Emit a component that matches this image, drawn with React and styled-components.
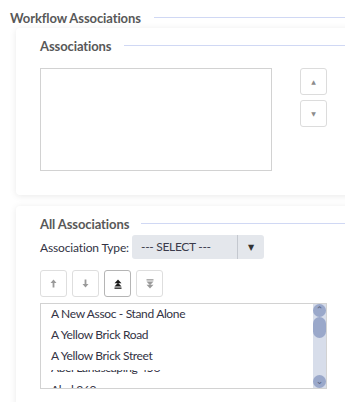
import React from 'react'
import styled, { createGlobalStyle } from 'styled-components'

const GlobalStyle = createGlobalStyle`
  body {
    margin: 0;
    background: #ffffff;
    font-family: Lato, "Open Sans", sans-serif;
    overflow: hidden;
  }
`

const items = [
  'A New Assoc - Stand Alone',
  'A Yellow Brick Road',
  'A Yellow Brick Street',
]

function ArrowUp({ color = '#9a9a9a' }) {
  return (
    <svg width="7" height="9" viewBox="0 0 7 9">
      <path d="M3.5 0.5 L6.5 4 H4.4 V8.5 H2.6 V4 H0.5 Z" fill={color} />
    </svg>
  )
}

function ArrowDown({ color = '#9a9a9a' }) {
  return (
    <svg width="7" height="9" viewBox="0 0 7 9">
      <path d="M3.5 8.5 L6.5 5 H4.4 V0.5 H2.6 V5 H0.5 Z" fill={color} />
    </svg>
  )
}

function ToTop({ color = '#1a1a1a' }) {
  return (
    <svg width="8" height="10" viewBox="0 0 8 10">
      <path d="M4 0.5 L7.5 4.2 H0.5 Z" fill={color} />
      <path d="M4 3.8 L7.5 7.5 H0.5 Z" fill={color} />
      <rect x="0.5" y="8.5" width="7" height="1.3" fill={color} />
    </svg>
  )
}

function ToBottom({ color = '#9a9a9a' }) {
  return (
    <svg width="8" height="10" viewBox="0 0 8 10">
      <rect x="0.5" y="0.2" width="7" height="1.3" fill={color} />
      <path d="M4 6.2 L7.5 2.5 H0.5 Z" fill={color} />
      <path d="M4 9.5 L7.5 5.8 H0.5 Z" fill={color} />
    </svg>
  )
}

function App() {
  return (
    <Page>
      <GlobalStyle />
      <Legend $pad="10px">
        <LegendText>Workflow Associations</LegendText>
        <Rule />
      </Legend>

      <Card $height="167px">
        <Legend>
          <LegendText>Associations</LegendText>
          <Rule />
        </Legend>
        <Split>
          <Box />
          <SideButtons>
            <SmallButton>
              <Tri>▲</Tri>
            </SmallButton>
            <SmallButton>
              <Tri>▼</Tri>
            </SmallButton>
          </SideButtons>
        </Split>
      </Card>

      <Card $top="11px" $height="200px">
        <Legend $small>
          <LegendText>All Associations</LegendText>
          <Rule />
        </Legend>
        <TypeRow>
          <Label>Association Type:</Label>
          <Select>
            <SelectText>--- SELECT ---</SelectText>
            <SelectCaret>▼</SelectCaret>
          </Select>
        </TypeRow>
        <ToolRow>
          <ToolButton>
            <ArrowUp />
          </ToolButton>
          <ToolButton>
            <ArrowDown />
          </ToolButton>
          <ToolButton $active>
            <ToTop />
          </ToolButton>
          <ToolButton>
            <ToBottom />
          </ToolButton>
        </ToolRow>
        <List>
          <Items>
            {items.map((t) => (
              <Item key={t}>{t}</Item>
            ))}
            <ClipItem>
              <ClipText>Abel Landscaping 456</ClipText>
            </ClipItem>
            <Item $last>Abel 360</Item>
          </Items>
          <Scrollbar>
            <ScrollCap>⌃</ScrollCap>
            <Thumb />
            <Spacer />
            <ScrollCap>⌄</ScrollCap>
          </Scrollbar>
        </List>
      </Card>
    </Page>
  )
}

export default App

const Page = styled.div`
  width: 345px;
  height: 402px;
  padding-top: 10px;
  box-sizing: border-box;
  overflow: hidden;
`

const Legend = styled.div`
  display: flex;
  align-items: center;
  gap: ${(p) => (p.$small ? '12px' : '13px')};
  padding-left: ${(p) => p.$pad || '0'};
  height: 15px;
`

const LegendText = styled.span`
  font-size: 13px;
  font-weight: 700;
  color: #585858;
  white-space: nowrap;
  letter-spacing: -0.1px;
`

const Rule = styled.div`
  flex: 1;
  height: 1px;
  background: #d0d8f4;
`

const Card = styled.div`
  margin-left: 16px;
  margin-right: -20px;
  margin-top: ${(p) => p.$top || '3px'};
  height: ${(p) => p.$height};
  background: #ffffff;
  border-radius: 4px;
  box-shadow: 0 1px 7px rgba(0, 0, 0, 0.09);
  padding: 10px 0 0 24px;
  box-sizing: border-box;
`

const Split = styled.div`
  display: flex;
  gap: 28px;
  margin-top: 15px;
`

const Box = styled.div`
  width: 232px;
  height: 103px;
  border: 1px solid #d2d2d2;
  box-sizing: border-box;
`

const SideButtons = styled.div`
  display: flex;
  flex-direction: column;
  gap: 5px;
`

const SmallButton = styled.div`
  width: 27px;
  height: 27px;
  border: 1px solid #dcdcdc;
  border-radius: 3px;
  box-sizing: border-box;
  display: flex;
  align-items: center;
  justify-content: center;
`

const Tri = styled.span`
  font-size: 6px;
  color: #8c8c8c;
  font-family: "DejaVu Sans", sans-serif;
`

const TypeRow = styled.div`
  display: flex;
  align-items: center;
  gap: 3px;
  margin-top: 4px;
`

const Label = styled.span`
  font-size: 12px;
  color: #333344;
  white-space: nowrap;
  letter-spacing: -0.15px;
`

const Select = styled.div`
  width: 132px;
  height: 24px;
  background: #e4e7ec;
  border-radius: 3px;
  display: flex;
  align-items: center;
`

const SelectText = styled.span`
  flex: 1;
  padding-left: 9px;
  font-size: 12px;
  letter-spacing: -0.3px;
  color: #3a3a4a;
  border-right: 1px solid #c4c8cf;
  line-height: 24px;
`

const SelectCaret = styled.span`
  width: 26px;
  text-align: center;
  font-size: 8px;
  color: #333333;
  font-family: "DejaVu Sans", sans-serif;
`

const ToolRow = styled.div`
  display: flex;
  gap: 5px;
  margin-top: 11px;
`

const ToolButton = styled.div`
  width: 27px;
  height: 27px;
  border: 1px solid ${(p) => (p.$active ? '#b5b5b5' : '#dedede')};
  border-radius: 3px;
  box-sizing: border-box;
  display: flex;
  align-items: center;
  justify-content: center;
`

const List = styled.div`
  display: flex;
  width: 287px;
  height: 86px;
  margin-top: 6px;
  border: 1px solid #d2d2d2;
  box-sizing: border-box;
  overflow: hidden;
`

const Items = styled.div`
  flex: 1;
  display: flex;
  flex-direction: column;
  padding: 0 0 0 10px;
  overflow: hidden;
`

const Item = styled.div`
  flex-shrink: 0;
  height: ${(p) => (p.$last ? '12px' : '21px')};
  line-height: ${(p) => (p.$last ? '12px' : '19px')};
  font-size: 12px;
  letter-spacing: -0.35px;
  color: #333344;
  white-space: nowrap;
`

const ClipItem = styled.div`
  flex-shrink: 0;
  height: 4px;
  overflow: hidden;
  margin-top: 3px;
  margin-bottom: 10px;
`

const ClipText = styled.div`
  font-size: 12px;
  line-height: 14px;
  margin-top: -9px;
  letter-spacing: -0.35px;
  color: #333344;
  white-space: nowrap;
`

const Scrollbar = styled.div`
  width: 13px;
  background: #d7ddea;
  display: flex;
  flex-direction: column;
  align-items: center;
`

const ScrollCap = styled.div`
  width: 13px;
  height: 13px;
  border-radius: 50%;
  background: #9aa8ca;
  color: #556080;
  font-size: 9px;
  line-height: 13px;
  text-align: center;
  font-family: "DejaVu Sans", sans-serif;
  flex-shrink: 0;
`

const Thumb = styled.div`
  width: 13px;
  height: 21px;
  border-radius: 7px;
  background: #9aa8ca;
  flex-shrink: 0;
`

const Spacer = styled.div`
  flex: 1;
`
